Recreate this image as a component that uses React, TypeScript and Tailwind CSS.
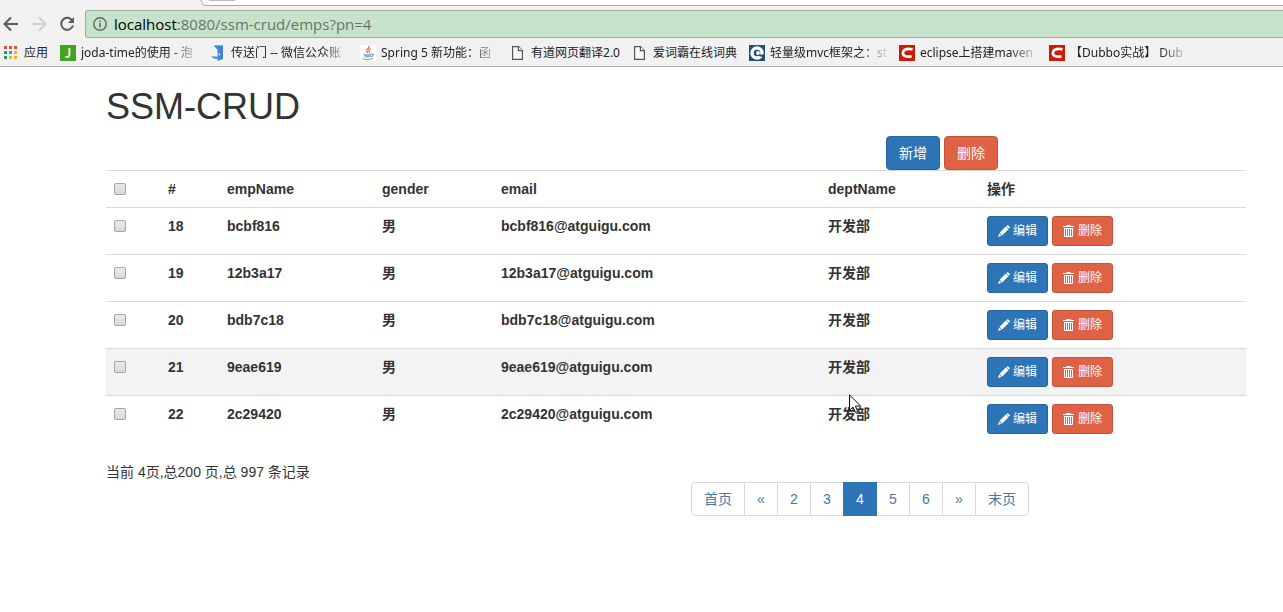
import type { ReactNode } from "react";

const latin = "font-['Liberation_Sans','Noto_Sans_CJK_SC',sans-serif]";
const chrome = "font-['Noto_Sans','Noto_Sans_CJK_SC',sans-serif]";

function BackIcon() {
  return (
    <svg viewBox="0 0 16 16" className="size-4" fill="none" stroke="#5a5a5a" strokeWidth="2">
      <path d="M15 8H2M8 1.5L1.5 8L8 14.5" />
    </svg>
  );
}

function ForwardIcon() {
  return (
    <svg viewBox="0 0 16 16" className="size-4" fill="none" stroke="#d0d0d0" strokeWidth="2">
      <path d="M1 8H14M8 1.5L14.5 8L8 14.5" />
    </svg>
  );
}

function ReloadIcon() {
  return (
    <svg viewBox="0 0 16 16" className="size-4" fill="none" stroke="#5a5a5a" strokeWidth="2">
      <path d="M13.2 4.4A6 6 0 1 0 14 9.5" />
      <path d="M15 1V7H9Z" fill="#5a5a5a" stroke="none" />
    </svg>
  );
}

function InfoIcon() {
  return (
    <svg viewBox="0 0 14 14" className="size-[14px] shrink-0" fill="none" stroke="#5f6b62" strokeWidth="1.4">
      <circle cx="7" cy="7" r="6.2" />
      <path d="M7 6V10.5M7 3.4V4.9" strokeWidth="1.6" />
    </svg>
  );
}

function AppsIcon() {
  const colors = ["#dd5144", "#dd5144", "#dd5144", "#1fa15d", "#4a8af4", "#f0b428", "#1fa15d", "#f0b428", "#f0b428"];
  return (
    <svg viewBox="0 0 13 13" className="size-[13px] shrink-0">
      {colors.map((c, i) => (
        <rect key={i} x={(i % 3) * 5} y={Math.floor(i / 3) * 5} width="3" height="3" fill={c} />
      ))}
    </svg>
  );
}

function JIcon() {
  return (
    <svg viewBox="0 0 16 16" className="size-4 shrink-0">
      <path d="M0 0H16V16H0Z" fill="#43a41f" />
      <path d="M9.4 3V9.8Q9.4 12 7.4 12Q6.3 12 5.4 11.4" fill="none" stroke="#fff" strokeWidth="1.8" />
    </svg>
  );
}

function DoorIcon() {
  return (
    <svg viewBox="0 0 16 16" className="size-4 shrink-0">
      <path d="M3 0.5H13V14H10V2Z" fill="#6aa5ea" />
      <path d="M4 0.5L13 0.5V14L7.5 16V4.5L4 1Z" fill="#4285d8" />
      <path d="M1 11.6H7.5V14Q3 14 1 11.6Z" fill="#4285d8" />
      <path d="M8.6 8.4H10V10.2H8.6Z" fill="#e8f1fc" />
    </svg>
  );
}

function JavaIcon() {
  return (
    <svg viewBox="0 0 16 16" className="size-4 shrink-0" fill="none">
      <path d="M0 0H16V16H0Z" fill="#fff" />
      <path d="M8.6 1Q9.6 2.6 7.4 4.2Q5.6 5.6 8 8M10.6 3.8Q8 5 9.4 6.4Q9.8 7 9 8" stroke="#e2694f" strokeWidth="1.2" />
      <path d="M3.6 8.6Q7.5 9.8 11.2 8.6V11Q10.6 12.7 7.6 12.7Q4.4 12.7 4 11Z" fill="#8db4d0" />
      <path d="M11.2 9Q14 8.4 13.2 10.2Q12.6 11.4 10.8 11.6M2.4 13.6Q7.5 15.8 13 13.6" stroke="#6f9fc4" strokeWidth="1.1" />
    </svg>
  );
}

function PageIcon() {
  return (
    <svg viewBox="0 0 16 16" className="size-4 shrink-0" fill="#fafafa" stroke="#555" strokeWidth="1.2">
      <path d="M2.6 1.6H8.6L12.4 5.4V14.4H2.6Z" />
      <path d="M8.4 1.6V5.6H12.4" />
    </svg>
  );
}

function BlueCIcon() {
  return (
    <svg viewBox="0 0 16 16" className="size-4 shrink-0" fill="none">
      <path d="M0 0H16V16H0Z" fill="#1f4e80" />
      <circle cx="8" cy="8" r="5" stroke="#fff" strokeWidth="3.4" />
      <path d="M8.4 9.6H15.4L16 12L11 11.6Z" fill="#1f4e80" />
      <circle cx="9" cy="8" r="1.9" fill="#fff" />
    </svg>
  );
}

function RedCIcon() {
  return (
    <svg viewBox="0 0 16 16" className="size-4 shrink-0" fill="none">
      <path d="M0 0H16V16H0Z" fill="#cc1b06" />
      <path d="M13.6 4.3Q5.4 2.8 4 7.2Q2.9 12.4 12.6 11.5" stroke="#fff" strokeWidth="2.6" />
    </svg>
  );
}

function PencilIcon() {
  return (
    <svg viewBox="0 0 12 12" className="size-3 shrink-0" fill="#fff">
      <path d="M9 0.4Q9.6 -0.1 10.2 0.4L11.6 1.8Q12.1 2.4 11.6 3L10.8 3.8L8.2 1.2ZM7.8 1.6L10.4 4.2L4.2 10.4L1.6 7.8ZM1.2 8.4L3.6 10.8L0 12Z" />
    </svg>
  );
}

function TrashIcon() {
  return (
    <svg viewBox="0 0 12 12" className="size-3 shrink-0" fill="none" stroke="#fff">
      <path d="M0 1.5H11M3.5 1.5V0.5H7.5V1.5M1.5 3V11.5H9.5V3M1 3.5H10M3.5 4V11M5.5 4V11M7.5 4V11" />
    </svg>
  );
}

type Bookmark = { label: string; icon: ReactNode; clipped: boolean };

const bookmarks: Bookmark[] = [
  { label: "joda-time的使用 - 泡", icon: <JIcon />, clipped: true },
  { label: "传送门 -- 微信公众账", icon: <DoorIcon />, clipped: true },
  { label: "Spring 5 新功能：函", icon: <JavaIcon />, clipped: true },
  { label: "有道网页翻译2.0", icon: <PageIcon />, clipped: false },
  { label: "爱词霸在线词典", icon: <PageIcon />, clipped: false },
  { label: "轻量级mvc框架之：st", icon: <BlueCIcon />, clipped: true },
  { label: "eclipse上搭建maven", icon: <RedCIcon />, clipped: true },
  { label: "【Dubbo实战】 Dub", icon: <RedCIcon />, clipped: true },
];

function BrowserBar() {
  return (
    <header className={`${chrome} h-[67px] border-b border-[#b0b0b0] bg-[#f1f1f1]`}>
      <div className="flex h-[6px] items-start">
        <div className="w-[200px]" />
        <svg viewBox="0 0 36 6" className="h-[6px] w-9 shrink-0">
          <path d="M1 0Q2 5.5 5 5.5H36V0Z" fill="#fff" />
          <path d="M1 0Q2 5.5 5 5.5H36" fill="none" stroke="#aaa" />
          <path d="M8 0H35V1H10Z" fill="#bbb" />
        </svg>
        <div className="h-full flex-1 border-b border-[#aaa] bg-white" />
      </div>
      <div className="mt-1 flex h-7 items-center pl-[3px]">
        <nav className="flex w-[82px] items-center gap-3" aria-label="Navigation">
          <button type="button" aria-label="Back"><BackIcon /></button>
          <button type="button" aria-label="Forward"><ForwardIcon /></button>
          <button type="button" aria-label="Reload"><ReloadIcon /></button>
        </nav>
        <a
          href="#address"
          className="flex h-7 flex-1 items-center gap-[7px] rounded-l-[3px] border border-r-0 border-[#a5a9a6] bg-[#c8e3cc] pl-[7px] font-['Open_Sans','Noto_Sans_CJK_SC',sans-serif] text-[15px] leading-5 text-[#66756a]"
        >
          <InfoIcon />
          <span><span className="text-black">localhost</span>:8080/ssm-crud/emps?pn=4</span>
        </a>
      </div>
      <nav className="flex h-[29px] items-center gap-3 pl-1 text-[12px] text-[#222]" aria-label="Bookmarks">
        <a href="#apps" className="flex items-center gap-[7px]">
          <AppsIcon />
          <span>应用</span>
        </a>
        {bookmarks.map((b) => (
          <a key={b.label} href="#bookmark" className="flex shrink-0 items-center gap-[5px]">
            {b.icon}
            {b.clipped ? (
              <span className="w-[117px] whitespace-nowrap [mask-image:linear-gradient(to_right,black_90px,transparent_120px)]">
                {b.label}
              </span>
            ) : (
              <span className="whitespace-nowrap">{b.label}</span>
            )}
          </a>
        ))}
      </nav>
    </header>
  );
}

const blue = "bg-[#2e75b8] border-[#2b6499] text-white";
const red = "bg-[#df6245] border-[#c2543b] text-white";

function Check({ label }: { label: string }) {
  return (
    <input
      type="checkbox"
      aria-label={label}
      className="mt-1 block size-3 appearance-none rounded-[2px] border border-[#a6a6a6] bg-linear-to-b from-[#ebebeb] to-[#d8d8d8] checked:bg-[#2e75b8]"
    />
  );
}

const employees = [
  { id: 18, name: "bcbf816" },
  { id: 19, name: "12b3a17" },
  { id: 20, name: "bdb7c18" },
  { id: 21, name: "9eae619" },
  { id: 22, name: "2c29420" },
];

const cell = "border-t border-[#dadada] p-2 text-left align-top font-bold";

function Pointer() {
  return (
    <svg viewBox="0 0 13 20" className="pointer-events-none absolute top-[-12px] left-[21px] h-5 w-[13px]">
      <path d="M0.5 0.8V16.5L4 13L6.5 18.6L8.8 17.6L6.4 12.1H11.6Z" fill="#fff" stroke="#111" />
    </svg>
  );
}

function EmployeeTable() {
  return (
    <table className="mb-5 w-full table-fixed border-collapse">
      <colgroup>
        <col className="w-[54px]" />
        <col className="w-[59px]" />
        <col className="w-[155px]" />
        <col className="w-[119px]" />
        <col className="w-[327px]" />
        <col className="w-[159px]" />
        <col />
      </colgroup>
      <thead>
        <tr>
          <th className={cell}><Check label="全选" /></th>
          {["#", "empName", "gender", "email", "deptName", "操作"].map((h) => (
            <th key={h} className={cell}>{h}</th>
          ))}
        </tr>
      </thead>
      <tbody>
        {employees.map((e) => (
          <tr key={e.id} className={e.id === 21 ? "bg-[#f3f3f3]" : "hover:bg-[#f3f3f3]"}>
            <td className={cell}><Check label={e.name} /></td>
            <td className={cell}>{e.id}</td>
            <td className={cell}>{e.name}</td>
            <td className={cell}>男</td>
            <td className={cell}>{e.name}@atguigu.com</td>
            <td className={cell}>
              <span className="relative">
                开发部
                {e.id === 22 && <Pointer />}
              </span>
            </td>
            <td className={cell}>
              <div className="flex gap-1 text-[12px] leading-[18px] font-normal">
                <button type="button" className={`${blue} flex h-[30px] items-center gap-[3px] rounded-[3px] border px-[10px]`}>
                  <PencilIcon />编辑
                </button>
                <button type="button" className={`${red} flex h-[30px] items-center gap-[3px] rounded-[3px] border px-[10px]`}>
                  <TrashIcon />删除
                </button>
              </div>
            </td>
          </tr>
        ))}
      </tbody>
    </table>
  );
}

const pages = ["首页", "«", "2", "3", "4", "5", "6", "»", "末页"];

function Pagination() {
  return (
    <nav aria-label="分页" className="mt-5 flex">
      {pages.map((p) => (
        <a
          key={p}
          href="#page"
          aria-current={p === "4" ? "page" : undefined}
          className={`-ml-px flex h-[34px] min-w-[34px] items-center justify-center border px-3 first:ml-0 first:rounded-l last:rounded-r ${
            p === "4" ? "z-10 border-[#2e75b8] bg-[#2e75b8] text-white" : "border-[#dadada] bg-white text-[#4279a8]"
          } ${p.length > 1 ? "w-[54px]" : "w-[34px]"}`}
        >
          {p}
        </a>
      ))}
    </nav>
  );
}

export default function App() {
  return (
    <div className="min-h-screen bg-white">
      <BrowserBar />
      <main className={`${latin} pt-5 pr-[37px] pl-[106px] text-[14px] leading-5 text-[#333]`}>
        <h1 className="mb-[10px] text-[36px] leading-[39px]">SSM-CRUD</h1>
        <div className="grid grid-cols-3 gap-[30px]">
          <div className="col-start-3 flex gap-1">
            <button type="button" className={`${blue} h-[34px] rounded border px-3`}>新增</button>
            <button type="button" className={`${red} h-[34px] rounded border px-3`}>删除</button>
          </div>
        </div>
        <EmployeeTable />
        <div className="grid grid-cols-2 gap-[30px]">
          <p>当前 4页,总200 页,总 997 条记录</p>
          <Pagination />
        </div>
      </main>
    </div>
  );
}
